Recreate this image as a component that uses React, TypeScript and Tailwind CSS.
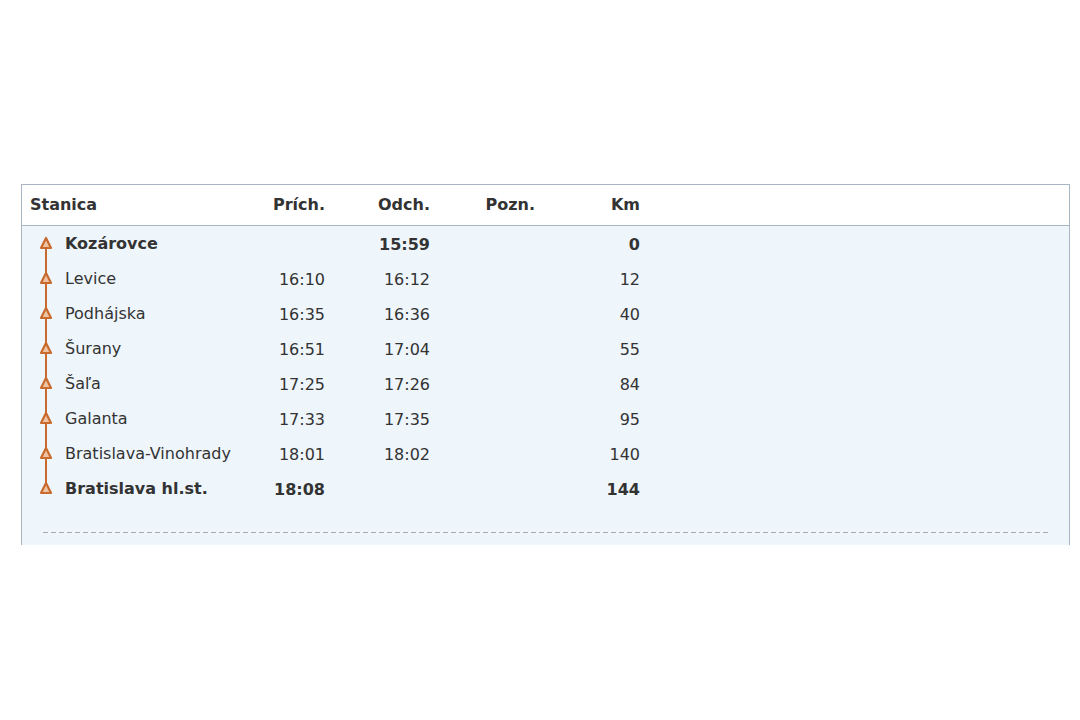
import React from "react";

type Row = { name: string; arr: string; dep: string; km: string; bold?: boolean };

const rows: Row[] = [
  { name: "Kozárovce", arr: "", dep: "15:59", km: "0", bold: true },
  { name: "Levice", arr: "16:10", dep: "16:12", km: "12" },
  { name: "Podhájska", arr: "16:35", dep: "16:36", km: "40" },
  { name: "Šurany", arr: "16:51", dep: "17:04", km: "55" },
  { name: "Šaľa", arr: "17:25", dep: "17:26", km: "84" },
  { name: "Galanta", arr: "17:33", dep: "17:35", km: "95" },
  { name: "Bratislava-Vinohrady", arr: "18:01", dep: "18:02", km: "140" },
  { name: "Bratislava hl.st.", arr: "18:08", dep: "", km: "144", bold: true },
];

function Marker({ first, last }: { first: boolean; last: boolean }) {
  return (
    <svg width="20" height="35" viewBox="0 0 20 35" className="block">
      {!first && <line x1="10" y1="0" x2="10" y2="17" stroke="#c96a2e" strokeWidth="2" />}
      {!last && <line x1="10" y1="17" x2="10" y2="35" stroke="#c96a2e" strokeWidth="2" />}
      <polygon points="10,12 15,22 5,22" fill="#efc4a2" stroke="#c96a2e" strokeWidth="2.2" strokeLinejoin="round" />
    </svg>
  );
}

export default function App() {
  return (
    <div className="w-[1080px] h-[720px] bg-white pt-[184px] pl-[21px]" style={{ fontFamily: '"DejaVu Sans", Verdana, sans-serif' }}>
      <div className="w-[1049px] h-[361px] border-l border-r border-t border-[#a7b6c2] bg-[#eef5fb] text-[#333] text-[16px]">
        <div className="h-[41px] bg-white border-b border-[#a7b6c2] flex items-center font-bold">
          <div className="w-[228px] pl-[8px]">Stanica</div>
          <div className="w-[75px] text-right">Prích.</div>
          <div className="w-[105px] text-right">Odch.</div>
          <div className="w-[105px] text-right">Pozn.</div>
          <div className="w-[105px] text-right">Km</div>
        </div>
        <div>
          {rows.map((r, i) => (
            <div key={r.name} className={`h-[35px] flex items-center ${r.bold ? "font-bold" : ""}`}>
              <div className="w-[14px]" />
              <Marker first={i === 0} last={i === rows.length - 1} />
              <div className="w-[194px] pl-[9px]">{r.name}</div>
              <div className="w-[75px] text-right pt-[2px]">{r.arr}</div>
              <div className="w-[105px] text-right pt-[2px]">{r.dep}</div>
              <div className="w-[105px] text-right"></div>
              <div className="w-[105px] text-right pt-[2px]">{r.km}</div>
            </div>
          ))}
        </div>
        <div className="mx-[21px] mt-[26px] h-px bg-[repeating-linear-gradient(90deg,#a9a9a9_0_5px,transparent_5px_8px)]" />
      </div>
    </div>
  );
}
